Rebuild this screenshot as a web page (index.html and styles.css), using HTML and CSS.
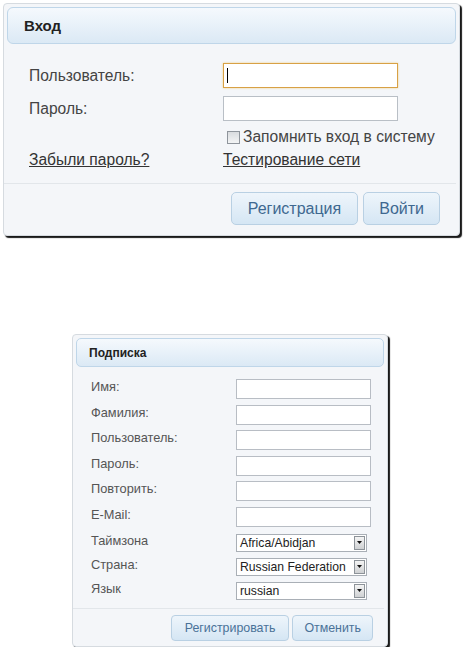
FILE: index.html
```html
<!DOCTYPE html>
<html lang="ru">
<head>
<meta charset="utf-8">
<title>Вход</title>
<link rel="stylesheet" href="styles.css">
</head>
<body>
<section class="panel login">
  <header class="panel-head"><h1>Вход</h1></header>
  <div class="login-grid">
    <label class="lbl">Пользователь:</label>
    <div class="field focused"><span class="caret"></span></div>
    <label class="lbl">Пароль:</label>
    <input class="field" type="password">
    <span></span>
    <label class="remember"><span class="check"></span>Запомнить вход в систему</label>
    <a class="link" href="#">Забыли пароль?</a>
    <a class="link" href="#">Тестирование сети</a>
  </div>
  <footer class="panel-foot">
    <button class="btn">Регистрация</button>
    <button class="btn">Войти</button>
  </footer>
</section>

<section class="panel signup">
  <header class="panel-head small"><h2>Подписка</h2></header>
  <div class="signup-grid">
    <label class="lbl2">Имя:</label><input class="field2" type="text">
    <label class="lbl2">Фамилия:</label><input class="field2" type="text">
    <label class="lbl2">Пользователь:</label><input class="field2" type="text">
    <label class="lbl2">Пароль:</label><input class="field2" type="password">
    <label class="lbl2">Повторить:</label><input class="field2" type="password">
    <label class="lbl2">E-Mail:</label><input class="field2" type="text">
    <label class="lbl2">Таймзона</label>
    <div class="select"><span class="val">Africa/Abidjan</span><span class="arrow"><svg width="5" height="3" viewBox="0 0 5 3"><path d="M0 0h5L2.5 3z" fill="#111"/></svg></span></div>
    <label class="lbl2">Страна:</label>
    <div class="select"><span class="val">Russian Federation</span><span class="arrow"><svg width="5" height="3" viewBox="0 0 5 3"><path d="M0 0h5L2.5 3z" fill="#111"/></svg></span></div>
    <label class="lbl2">Язык</label>
    <div class="select"><span class="val">russian</span><span class="arrow"><svg width="5" height="3" viewBox="0 0 5 3"><path d="M0 0h5L2.5 3z" fill="#111"/></svg></span></div>
  </div>
  <footer class="panel-foot small">
    <button class="btn small">Регистрировать</button>
    <button class="btn small">Отменить</button>
  </footer>
</section>
</body>
</html>
```
FILE: styles.css
```css
* { box-sizing: border-box; }
html, body { margin: 0; padding: 0; background: #fff; }
body { font-family: "Liberation Sans", Arial, sans-serif; color: #444; }

.panel {
  background: #f4f6f9;
  border: 1px solid #d6dbe0;
  border-radius: 4px;
  box-shadow: 2px 2px 1px rgba(0,0,0,0.9);
}
.login { margin: 3px 0 0 3px; width: 457px; height: 233px; }
.signup { margin: 98px 0 0 72px; width: 316px; height: 313px; }

.panel-head {
  margin: 3px;
  height: 37px;
  border: 1px solid #bfd6e9;
  border-radius: 6px;
  background: linear-gradient(#f5f9fd, #dbe9f5);
  display: flex;
  align-items: center;
  padding-left: 16px;
}
.panel-head h1 { margin: 0; font-size: 15px; font-weight: bold; color: #222; }
.panel-head.small { height: 29px; padding-left: 12px; border-radius: 5px; }
.panel-head h2 { margin: 0; font-size: 12px; font-weight: bold; color: #222; }

.login-grid {
  display: grid;
  grid-template-columns: 194px 175px;
  grid-template-rows: 25px 25px 16px 16px;
  row-gap: 8px;
  padding: 16px 0 0 25px;
  align-items: center;
}
.lbl { font-size: 15.6px; color: #444; }
.field {
  display: block;
  width: 175px;
  height: 25px;
  margin: 0;
  border: 1px solid #b9bfc6;
  background: #fff;
  position: relative;
}
.field.focused { border-color: #d8a145; box-shadow: 0 0 2px 0 #f2cf88; }
.caret { position: absolute; left: 3px; top: 4px; width: 1px; height: 15px; background: #000; }
.remember {
  font-size: 15.6px; color: #444;
  display: flex; align-items: center; gap: 3px;
  margin-left: 4px; white-space: nowrap;
}
.check {
  flex: none;
  width: 13px; height: 13px;
  border: 1px solid #8f959c;
  background: linear-gradient(#d9dcdf, #f3f4f5);
}
.link { font-size: 15.6px; color: #333; text-decoration: underline; white-space: nowrap; margin-top: -3px; }

.panel-foot {
  margin: 14px 3px 0 0;
  border-top: 1px solid #e2e6ea;
  display: flex;
  justify-content: flex-end;
  gap: 5px;
  padding: 8px 16px 0 0;
}
.btn {
  font-family: "Liberation Sans", Arial, sans-serif;
  font-size: 16px;
  color: #3e6890;
  height: 33px;
  padding: 0 16px;
  border: 1px solid #b9d0e3;
  border-radius: 5px;
  background: linear-gradient(#eef5fb, #d5e6f4);
}
.btn + .btn { padding: 0 15px; }

.signup-grid {
  display: grid;
  grid-template-columns: 145px 135px;
  grid-template-rows: repeat(6, 25.6px) repeat(3, 24px);
  padding: 9px 0 0 18px;
  align-items: start;
}
.lbl2 { font-size: 12.8px; line-height: 18px; color: #555; white-space: nowrap; margin-top: -1px; }
.field2 {
  display: block;
  width: 135px;
  height: 20px;
  margin: 0;
  border: 1px solid #b8bdc4;
  background: #fff;
}
.select {
  width: 131px;
  height: 18px;
  margin-top: 1px;
  border: 1px solid #a9afb6;
  background: #fff;
  display: flex;
  align-items: center;
  justify-content: space-between;
  padding: 0 1px 0 3px;
}
.select .val { font-size: 12.2px; color: #222; }
.arrow {
  width: 11px; height: 14px;
  border: 1px solid #8d9399;
  background: linear-gradient(#f4f4f4, #cfd1d3);
  display: flex; align-items: center; justify-content: center;
}
.arrow svg { display: block; }

.panel-foot.small { margin: 3px 3px 0 0; padding: 6px 11px 0 0; gap: 3px; }
.btn.small { font-size: 12.4px; height: 26px; padding: 0 13px; border-radius: 4px; color: #4a7298; }
.btn.small + .btn.small { padding: 0 11px; }
```
